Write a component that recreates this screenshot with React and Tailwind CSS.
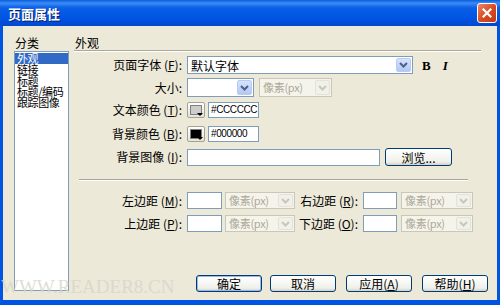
// App.jsx - XP style "页面属性" dialog
const font = { fontFamily: '"Noto Sans CJK SC", "Liberation Sans", sans-serif' };

function Chevron({ disabled = false }) {
  return (
    <svg width="9" height="6" viewBox="0 0 9 6">
      <path d="M1 1 L4.5 4.5 L8 1" fill="none" stroke={disabled ? "#C9C7BA" : "#4D6185"} strokeWidth="2" />
    </svg>
  );
}

function Select({ width, value = "", disabled = false, h = "h-[18px]" }) {
  return (
    <div
      className={`${h} flex items-center border ${disabled ? "border-[#C9C7BA] bg-[#F5F4EA]" : "border-[#7F9DB9] bg-white"} p-px`}
      style={{ width }}
    >
      <span
        className={`flex-1 pl-[2px] leading-[13px] whitespace-nowrap ${
          disabled ? "text-[11px] text-[#ACA899] tracking-[-0.3px]" : "text-black text-[12px]"
        }`}
      >
        {value}
      </span>
      <div
        className={`h-full w-[15px] shrink-0 flex items-center justify-center rounded-[2px] border ${
          disabled
            ? "border-[#E3E2DA] bg-[#F1F0E9]"
            : "border-[#B9CBF3] bg-[linear-gradient(#D6E3FD,#B2C7F6)]"
        }`}
      >
        <Chevron disabled={disabled} />
      </div>
    </div>
  );
}

function Input({ width, value = "", h = "h-[17px]" }) {
  return (
    <div
      className={`${h} border border-[#7F9DB9] bg-white flex items-center pl-[2px] text-[10px] tracking-[-0.4px] leading-none text-black`}
      style={{ width, fontFamily: '"Liberation Sans", sans-serif' }}
    >
      {value}
    </div>
  );
}

function Swatch({ color }) {
  return (
    <div className="w-[18px] h-[16px] border border-[#A5A397] rounded-[2px] bg-[linear-gradient(#FFFFFF,#E6E3D6)] p-[2px] relative">
      <div className="w-full h-full border border-[#808080]" style={{ background: color }} />
      <div className="absolute right-[1px] bottom-[1px] w-0 h-0 border-l-[3px] border-r-[3px] border-t-[3px] border-l-transparent border-r-transparent border-t-black" />
    </div>
  );
}

function Button({ children, w = "w-[66px]", isDefault = false, h = "h-[17px]" }) {
  return (
    <div
      className={`${w} ${h} rounded-[3px] border border-[#003C74] bg-[linear-gradient(#FFFFFF,#F0F0EA_80%,#D6D0C5)] flex items-center justify-center text-[12px] leading-[13px] text-black ${
        isDefault ? "shadow-[inset_0_0_0_1px_#9DB7E8]" : ""
      }`}
    >
      {children}
    </div>
  );
}

function Label({ children, w = "w-[113px]" }) {
  return (
    <div className={`${w} shrink-0 pr-[5px] text-right text-[12px] leading-[14px] text-black whitespace-nowrap`}>
      {children}
    </div>
  );
}

function Key({ k }) {
  return (
    <span>
      (<span className="underline">{k}</span>)
    </span>
  );
}

function Etched({ className = "" }) {
  return (
    <div className={className}>
      <div className="h-px bg-[#ACA899]" />
      <div className="h-px bg-white" />
    </div>
  );
}

export default function App() {
  const items = ["外观", "链接", "标题", "标题/编码", "跟踪图像"];
  return (
    <div className="w-[500px] h-[305px] flex flex-col bg-[#0054E3] relative overflow-hidden" style={font}>
      {/* title bar */}
      <div className="h-[26px] flex items-center justify-between pl-[8px] pr-[3px] bg-[linear-gradient(#0A5DDE,#3C8CF5_12%,#0A5FE6_30%,#0054E3_70%,#0048D0)]">
        <span className="text-white font-bold text-[13px] leading-none [text-shadow:1px_1px_#0A1E6E]">页面属性</span>
        <div className="w-[20px] h-[20px] rounded-[3px] border border-white bg-[linear-gradient(135deg,#E8876A,#D9481E_55%,#C43A12)] flex items-center justify-center">
          <svg width="10" height="10" viewBox="0 0 10 10">
            <path d="M1.5 1.5 L8.5 8.5 M8.5 1.5 L1.5 8.5" stroke="white" strokeWidth="2.2" strokeLinecap="square" />
          </svg>
        </div>
      </div>

      {/* content */}
      <div className="flex-1 mx-[3px] mb-[5px] bg-[#ECE9D8] flex">
        {/* left */}
        <div className="ml-[11px] w-[55px] flex flex-col pt-[11px] pb-[9px]">
          <div className="h-[14px] pl-[1px] text-[12px] leading-[12px] text-black">分类</div>
          <div className="flex-1 bg-white border border-[#7F9DB9] pt-px">
            {items.map((it, i) => (
              <div
                key={it}
                className={`h-[11px] pl-[2px] text-[11px] leading-[11px] whitespace-nowrap tracking-[-0.4px] ${
                  i === 0 ? "bg-[#316AC5] text-white w-[53px]" : "text-black"
                }`}
              >
                {it}
              </div>
            ))}
          </div>
        </div>

        {/* right */}
        <div className="ml-[5px] flex-1 flex flex-col pt-[11px]">
          <div className="h-[13px] pl-[1px] text-[12px] leading-[12px] text-black">外观</div>
          <Etched className="w-[407px]" />

          <div className="mt-[4px] h-[18px] flex items-center">
            <Label>
              页面字体 <Key k="F" />:
            </Label>
            <Select width={226} value="默认字体" />
            <span className="ml-[9px] text-[13px] font-bold leading-none" style={{ fontFamily: '"Liberation Serif", serif' }}>
              B
            </span>
            <span className="ml-[12px] text-[13px] font-bold italic leading-none" style={{ fontFamily: '"Liberation Serif", serif' }}>
              I
            </span>
          </div>

          <div className="mt-[4px] h-[19px] flex items-center">
            <Label>大小:</Label>
            <Select width={67} h="h-[19px]" />
            <div className="ml-[5px]">
              <Select width={73} h="h-[19px]" value="像素(px)" disabled />
            </div>
          </div>

          <div className="mt-[5px] h-[16px] flex items-center">
            <Label>
              文本颜色 <Key k="T" />:
            </Label>
            <Swatch color="#CCCCCC" />
            <div className="ml-[3px]">
              <Input width={51} value="#CCCCCC" h="h-[16px]" />
            </div>
          </div>

          <div className="mt-[8px] h-[16px] flex items-center">
            <Label>
              背景颜色 <Key k="B" />:
            </Label>
            <Swatch color="#000000" />
            <div className="ml-[3px]">
              <Input width={51} value="#000000" h="h-[16px]" />
            </div>
          </div>

          <div className="mt-[6px] h-[18px] flex items-center">
            <Label>
              背景图像 <Key k="I" />:
            </Label>
            <Input width={193} h="h-[17px]" />
            <div className="ml-[5px]">
              <Button w="w-[67px]" h="h-[18px]">
                浏览...
              </Button>
            </div>
          </div>

          <Etched className="mt-[13px] ml-[5px] w-[389px]" />

          <div className="mt-[11px] h-[17px] flex items-center">
            <Label>
              左边距 <Key k="M" />:
            </Label>
            <Input width={35} />
            <div className="ml-[3px]">
              <Select width={70} h="h-[17px]" value="像素(px)" disabled />
            </div>
            <Label w="w-[68px]">
              右边距 <Key k="R" />:
            </Label>
            <Input width={34} />
            <div className="ml-[4px]">
              <Select width={72} h="h-[17px]" value="像素(px)" disabled />
            </div>
          </div>

          <div className="mt-[6px] h-[17px] flex items-center">
            <Label>
              上边距 <Key k="P" />:
            </Label>
            <Input width={35} />
            <div className="ml-[3px]">
              <Select width={70} h="h-[17px]" value="像素(px)" disabled />
            </div>
            <Label w="w-[68px]">
              下边距 <Key k="O" />:
            </Label>
            <Input width={34} />
            <div className="ml-[4px]">
              <Select width={72} h="h-[17px]" value="像素(px)" disabled />
            </div>
          </div>

          <div className="mt-auto mb-[8px] mr-[9px] flex justify-end gap-[8px]">
            <Button isDefault>确定</Button>
            <Button>取消</Button>
            <div className="ml-[2px]">
              <Button>
                应用 <Key k="A" />
              </Button>
            </div>
            <div className="ml-[2px]">
              <Button>
                帮助 <Key k="H" />
              </Button>
            </div>
          </div>
        </div>
      </div>

      {/* watermark */}
      <div
        className="absolute left-[1px] top-[277px] text-[19px] leading-none text-[#D8D6CC] opacity-80 pointer-events-none"
        style={{ fontFamily: '"Liberation Serif", serif' }}
      >
        WWW.READER8.CN
      </div>
    </div>
  );
}
